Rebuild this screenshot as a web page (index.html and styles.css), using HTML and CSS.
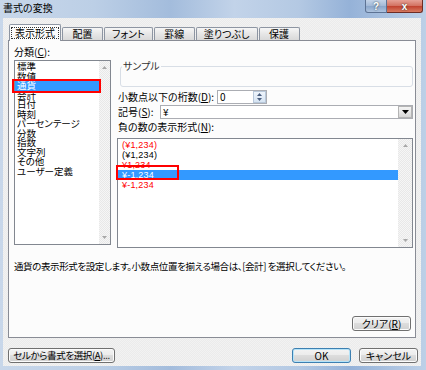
FILE: index.html
```html
<!DOCTYPE html>
<html lang="ja">
<head>
    <meta charset="UTF-8">
    <title>書式の変換</title>
    <link rel="stylesheet" href="styles.css">
</head>
<body>
<div class="window">
    <div class="titlebar">
        <span class="title">書式の変換</span>
        <div class="caption">
            <span class="cap-btn help">?</span>
            <span class="cap-btn close">x</span>
        </div>
    </div>

    <div class="client">
        <div class="tabs">
            <div class="tab active"><span class="focus">表示形式</span></div>
            <div class="tab">配置</div>
            <div class="tab">フォント</div>
            <div class="tab">罫線</div>
            <div class="tab">塗りつぶし</div>
            <div class="tab">保護</div>
        </div>

        <div class="panel">
            <div class="panel-body">
                <div class="category">
                    <div class="label">分類(<u>C</u>):</div>
                    <div class="listbox category-list">
                        <ul class="items">
                            <li>標準</li>
                            <li>数値</li>
                            <li class="selected">通貨</li>
                            <li>会計</li>
                            <li>日付</li>
                            <li>時刻</li>
                            <li>パーセンテージ</li>
                            <li>分数</li>
                            <li>指数</li>
                            <li>文字列</li>
                            <li>その他</li>
                            <li>ユーザー定義</li>
                        </ul>
                        <div class="scrollbar">
                            <span class="arrow"><svg width="5" height="3" viewBox="0 0 5 3"><polygon points="0,3 2.5,0 5,3" fill="#a8a8a8"/></svg></span>
                            <span class="arrow"><svg width="5" height="3" viewBox="0 0 5 3"><polygon points="0,0 2.5,3 5,0" fill="#a8a8a8"/></svg></span>
                        </div>
                    </div>
                </div>

                <div class="options">
                    <div class="sample"><span class="sample-label">サンプル</span></div>

                    <div class="field decimals-row">
                        <span class="field-label decimals">小数点以下の桁数(<u>D</u>):</span>
                        <div class="spin-input">
                            <span class="value">0</span>
                            <div class="spin">
                                <span><svg width="5" height="3" viewBox="0 0 5 3"><polygon points="0,3 2.5,0 5,3" fill="#4a5f80"/></svg></span>
                                <span><svg width="5" height="3" viewBox="0 0 5 3"><polygon points="0,0 2.5,3 5,0" fill="#4a5f80"/></svg></span>
                            </div>
                        </div>
                    </div>

                    <div class="field symbol-row">
                        <span class="field-label symbol">記号(<u>S</u>):</span>
                        <div class="combo">
                            <span class="value">¥</span>
                            <span class="drop"><svg width="7" height="4" viewBox="0 0 7 4"><polygon points="0,0 7,0 3.5,4" fill="#000"/></svg></span>
                        </div>
                    </div>

                    <div class="label neg-label">負の数の表示形式(<u>N</u>):</div>
                    <div class="listbox negative-list">
                        <ul class="items">
                            <li class="red">(¥1,234)</li>
                            <li>(¥1,234)</li>
                            <li class="red">¥1,234</li>
                            <li class="selected">¥-1,234</li>
                            <li class="red">¥-1,234</li>
                        </ul>
                        <div class="scrollbar">
                            <span class="arrow"><svg width="5" height="3" viewBox="0 0 5 3"><polygon points="0,3 2.5,0 5,3" fill="#a8a8a8"/></svg></span>
                            <span class="arrow"><svg width="5" height="3" viewBox="0 0 5 3"><polygon points="0,0 2.5,3 5,0" fill="#a8a8a8"/></svg></span>
                        </div>
                    </div>
                </div>
            </div>

            <p class="description">通貨の表示形式を設定します。小数点位置を揃える場合は、[会計] を選択してください。</p>

            <button class="btn clear">クリア(<u>R</u>)</button>
        </div>

        <div class="dialog-buttons">
            <button class="btn pick">セルから書式を選択(<u>A</u>)...</button>
            <button class="btn ok">OK</button>
            <button class="btn cancel">キャンセル</button>
        </div>
    </div>

    <!-- red marks drawn over the lists -->
    <div class="mark mark-currency"></div>
    <div class="mark mark-negative"></div>
</div>
</body>
</html>
```

FILE: styles.css
```css
* {
    margin: 0;
    padding: 0;
    box-sizing: border-box;
}

body {
    width: 426px;
    height: 370px;
    overflow: hidden;
    font-family: "Noto Sans CJK JP", "Liberation Sans", sans-serif;
    font-size: 10px;
    color: #000;
    font-feature-settings: "palt";
}

.window {
    position: relative;
    width: 426px;
    height: 370px;
    display: flex;
    flex-direction: column;
    padding: 0 5px 4px 3px;
    background: linear-gradient(90deg, #c8d7ea 0%, #bccfe6 22%, #a3bcdc 40%, #c2d3e9 55%, #b4c9e3 70%, #95b2d8 82%, #bdd0e7 100%);
}

/* title bar */
.titlebar {
    display: flex;
    height: 18px;
    margin: 0 -5px 0 -3px;
    padding-left: 3px;
}

.title {
    line-height: 16px;
}

.caption {
    display: flex;
    margin-left: auto;
    margin-right: 3px;
    height: 13px;
}

.cap-btn {
    display: flex;
    align-items: center;
    justify-content: center;
    height: 13px;
    color: #fff;
    font-family: "Liberation Sans", sans-serif;
    font-weight: bold;
    font-size: 10px;
    text-shadow: 0 0 2px #233;
}

.help {
    width: 22px;
    border: 1px solid #5d7394;
    border-top: 0;
    border-radius: 0 0 0 3px;
    background: linear-gradient(#c3d3e8, #a2b9d7 50%, #8aa6ca 51%, #adc3df);
}

.close {
    width: 36px;
    border: 1px solid #6e2c24;
    border-left: 0;
    border-top: 0;
    border-radius: 0 0 3px 0;
    background: linear-gradient(#e6a196, #d2705f 50%, #c0412e 51%, #d87a60);
}

/* dialog client area */
.client {
    flex: 1;
    display: flex;
    flex-direction: column;
    padding: 6px 5px 0;
    background: repeating-conic-gradient(#f2f2f2 0 25%, #ebebeb 0 50%) 0 0 / 2px 2px;
}

.tabs {
    display: flex;
    align-items: flex-end;
    gap: 1px;
    height: 16px;
    padding-left: 1px;
}

.tab {
    height: 13px;
    min-width: 41px;
    padding: 0 7px;
    line-height: 12px;
    text-align: center;
    border: 1px solid #8d95a2;
    border-bottom: 0;
    border-radius: 2px 2px 0 0;
    background: linear-gradient(#f6f6f6, #e6e6e6 50%, #d9d9d9);
}

.tab.active {
    position: relative;
    z-index: 1;
    height: 17px;
    margin-bottom: -1px;
    padding: 2px 1px 0;
    background: #fcfcfc;
}

.focus {
    display: block;
    padding: 0 3px;
    line-height: 10px;
    border: 1px dotted #333;
}

.panel {
    height: 298px;
    display: flex;
    flex-direction: column;
    padding: 0 2px 0 5px;
    border: 1px solid #898c95;
    background: #fcfcfc;
}

.panel-body {
    display: grid;
    grid-template-columns: 97px 296px;
    column-gap: 6px;
    align-items: start;
}

.label {
    line-height: 12px;
}

.category .label {
    margin-top: 5px;
}

/* list boxes */
.listbox {
    display: flex;
    border: 1px solid #828790;
    background: #fff;
}

.items {
    flex: 1;
    list-style: none;
    padding-top: 1px;
}

.category-list {
    height: 185px;
    margin-top: 2px;
}

.category-list li {
    height: 9.5px;
    line-height: 9.5px;
    padding-left: 2px;
    font-family: "Liberation Sans", "Noto Sans CJK JP", sans-serif;
    font-size: 9.5px;
    white-space: nowrap;
}

.negative-list {
    height: 110px;
    margin-top: 5px;
}

.negative-list li {
    line-height: 10px;
    padding-left: 4px;
    font-family: "Liberation Sans", sans-serif;
    font-size: 9px;
    letter-spacing: 0.2px;
}

.items .selected {
    background: #3399ff;
    color: #fff;
}

.red {
    color: #ff0000;
}

.scrollbar {
    display: flex;
    flex-direction: column;
    justify-content: space-between;
    background: repeating-conic-gradient(#f6f6f6 0 25%, #e8e8e8 0 50%) 0 0 / 2px 2px;
}

.category-list .scrollbar {
    width: 11px;
}

.negative-list .scrollbar {
    width: 14px;
}

.arrow {
    height: 13px;
    display: flex;
    align-items: center;
    justify-content: center;
}

.arrow svg {
    display: block;
}

/* right column */
.sample {
    height: 21px;
    margin: 25px 0 0 3px;
    padding-left: 1px;
    border: 1px solid #d8dee6;
    border-radius: 3px;
}

.sample-label {
    display: inline-block;
    vertical-align: top;
    margin-top: -7px;
    padding: 0 1px;
    line-height: 12px;
    color: #333;
    background: #fcfcfc;
}

.field {
    display: flex;
    align-items: center;
    height: 14px;
    padding-left: 1px;
}

.decimals-row {
    margin-top: 3px;
}

.symbol-row {
    margin-top: 1px;
}

.field-label {
    line-height: 12px;
    white-space: nowrap;
}

.decimals {
    width: 99px;
}

.symbol {
    width: 42px;
}

.spin-input {
    display: flex;
    width: 50px;
    height: 14px;
    border: 1px solid #abadb3;
    background: #fff;
}

.value {
    flex: 1;
    padding-left: 2px;
    line-height: 12px;
}

.spin {
    display: flex;
    flex-direction: column;
    width: 13px;
    border: 1px solid #b8c8da;
    background: linear-gradient(#eef4fb, #d6e4f3);
}

.spin span {
    flex: 1;
    display: flex;
    align-items: center;
    justify-content: center;
}

.spin svg {
    display: block;
}

.combo {
    flex: 1;
    display: flex;
    height: 14px;
    border: 1px solid #abadb3;
    background: #fff;
}

.drop {
    width: 14px;
    display: flex;
    align-items: center;
    justify-content: center;
    border: 1px solid #b4b4b4;
    background: linear-gradient(#f4f4f4, #e6e6e6 50%, #d6d6d6);
}

.drop svg {
    display: block;
}

.neg-label {
    margin-top: 2px;
    padding-left: 1px;
}

.description {
    margin-top: 12px;
    line-height: 12px;
    font-size: 9.5px;
    letter-spacing: -0.4px;
    white-space: nowrap;
}

/* buttons */
.btn {
    height: 15px;
    padding: 0;
    font: inherit;
    font-feature-settings: "palt";
    line-height: 13px;
    white-space: nowrap;
    color: #000;
    border: 1px solid #707070;
    border-radius: 3px;
    background: linear-gradient(#f3f3f3, #ececec 45%, #dddddd 50%, #d0d0d0);
    box-shadow: inset 0 0 0 1px #fbfbfb;
}

.clear {
    width: 59px;
    align-self: flex-end;
    margin: auto 2px 6px 0;
}

.dialog-buttons {
    display: flex;
    gap: 8px;
    margin-top: 10px;
    margin-right: -2px;
}

.pick {
    width: 107px;
    margin-right: auto;
    font-size: 9.5px;
    letter-spacing: -0.4px;
}

.ok,
.cancel {
    width: 59px;
}

.ok {
    border-color: #3c7fb1;
    box-shadow: inset 0 0 0 1px #b5e3f8;
}

/* annotation boxes */
.mark {
    position: absolute;
    border: 2px solid #ff0000;
}

.mark-currency {
    left: 12px;
    top: 79px;
    width: 89px;
    height: 14px;
}

.mark-negative {
    left: 116px;
    top: 165px;
    width: 63px;
    height: 15px;
}
```
